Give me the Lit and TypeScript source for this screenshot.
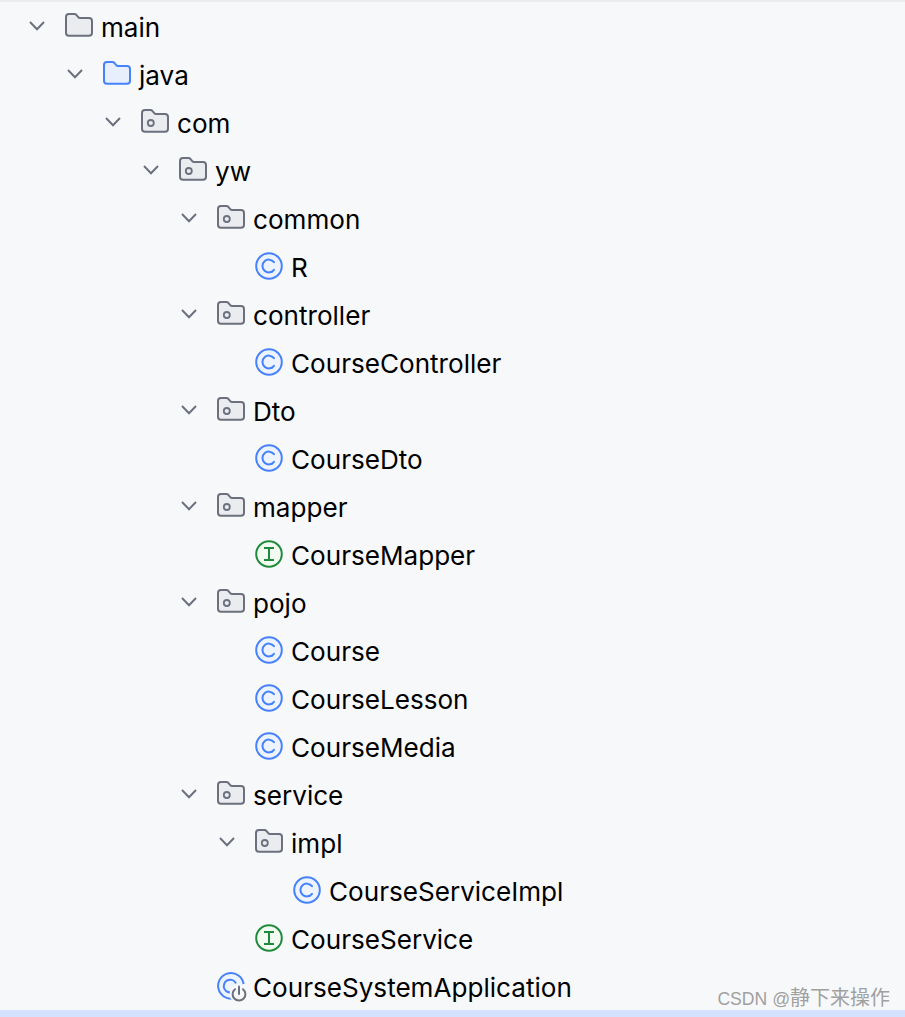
import { LitElement, html, css, svg } from "lit";
import { customElement } from "lit/decorators.js";

type Kind = "source" | "java" | "pkg" | "class" | "iface" | "run";
interface Node { d: number; k: Kind; t: string; }

const ROWS: Node[] = [
  { d: 0, k: "source", t: "main" },
  { d: 1, k: "java", t: "java" },
  { d: 2, k: "pkg", t: "com" },
  { d: 3, k: "pkg", t: "yw" },
  { d: 4, k: "pkg", t: "common" },
  { d: 5, k: "class", t: "R" },
  { d: 4, k: "pkg", t: "controller" },
  { d: 5, k: "class", t: "CourseController" },
  { d: 4, k: "pkg", t: "Dto" },
  { d: 5, k: "class", t: "CourseDto" },
  { d: 4, k: "pkg", t: "mapper" },
  { d: 5, k: "iface", t: "CourseMapper" },
  { d: 4, k: "pkg", t: "pojo" },
  { d: 5, k: "class", t: "Course" },
  { d: 5, k: "class", t: "CourseLesson" },
  { d: 5, k: "class", t: "CourseMedia" },
  { d: 4, k: "pkg", t: "service" },
  { d: 5, k: "pkg", t: "impl" },
  { d: 6, k: "class", t: "CourseServiceImpl" },
  { d: 5, k: "iface", t: "CourseService" },
  { d: 4, k: "run", t: "CourseSystemApplication" },
];

const FOLDER = "M1 5 a3 3 0 0 1 3-3 h5.5 a2.5 2.5 0 0 1 1.8.8 l2 2.4 a2.5 2.5 0 0 0 1.8.8 h8.9 a3 3 0 0 1 3 3 v11.7 a3 3 0 0 1-3 3 h-20 a3 3 0 0 1-3-3 z";

function icon(k: Kind) {
  let body;
  if (k === "source") {
    body = svg`<path d=${FOLDER} fill="#ebecf0" stroke="#6c707e" stroke-width="2"/>`;
  } else if (k === "java") {
    body = svg`<path d=${FOLDER} fill="#e7effd" stroke="#4682fa" stroke-width="2"/>`;
  } else if (k === "pkg") {
    body = svg`<path d=${FOLDER} fill="#ebecf0" stroke="#6c707e" stroke-width="2"/>
      <circle cx="9.8" cy="15" r="3" fill="none" stroke="#6c707e" stroke-width="1.8"/>`;
  } else if (k === "class") {
    body = svg`<circle cx="14" cy="14" r="12.8" fill="#edf3ff" stroke="#4682fa" stroke-width="2"/>
      <path d="M19 10.2 a6.4 6.4 0 1 0 0 7.6" fill="none" stroke="#4682fa" stroke-width="2" stroke-linecap="round"/>`;
  } else if (k === "iface") {
    body = svg`<circle cx="14" cy="14" r="12.8" fill="#f2fcf3" stroke="#208a3c" stroke-width="2"/>
      <path d="M9 8 h10 M9 20 h10 M14 8 v12" fill="none" stroke="#208a3c" stroke-width="2"/>`;
  } else {
    body = svg`<path d="M16.5 26.4 A12.8 12.8 0 1 1 26.6 12" fill="#edf3ff" stroke="#4682fa" stroke-width="2"/>
      <path d="M18.6 10.6 a6.4 6.4 0 1 0 -3 9.4" fill="none" stroke="#4682fa" stroke-width="2" stroke-linecap="round"/>
      <circle cx="22" cy="22" r="9.5" fill="#f7f8fa"/>
      <path d="M18 17.2 a6.4 6.4 0 1 0 8 0" fill="none" stroke="#6c707e" stroke-width="2" stroke-linecap="round"/>
      <path d="M22 14.5 v7.5" fill="none" stroke="#6c707e" stroke-width="2" stroke-linecap="round"/>`;
  }
  return html`<svg class="ic" viewBox="0 0 28 28" width="28" height="28">${body}</svg>`;
}

const chevron = html`<svg class="chev" viewBox="0 0 16 10" width="16" height="10"><path d="M1 1 L8 8.2 L15 1" fill="none" stroke="#6c707e" stroke-width="2"/></svg>`;

@customElement("app-root")
export class AppRoot extends LitElement {
  static styles = css`
    :host { display: block; }
    .page {
      position: relative;
      height: 1017px;
      background: #f7f8fa;
      display: flex;
      flex-direction: column;
      overflow: hidden;
      font-family: "Inter", "Liberation Sans", sans-serif;
      color: #000;
    }
    .top { height: 2px; background: #ebecf0; flex: none; }
    .tree { flex: 1; }
    .bottom { height: 7px; background: #d4e2ff; flex: none; }
    .row { display: flex; align-items: center; height: 48px; font-size: 26.1px; white-space: nowrap; }
    .twist { width: 65px; flex: none; box-sizing: border-box; padding-left: 29px; display: flex; align-items: center; }
    .ic { flex: none; margin-right: 8px; display: block; overflow: visible; }
    .chev { display: block; }
    .label { padding-top: 2px; }
    .mark {
      position: absolute;
      right: 15px;
      top: 985px;
      font-family: "Liberation Sans", "Noto Sans CJK SC", sans-serif;
      font-size: 20px;
      line-height: 26px;
      color: #a0a0a0;
    }
    .latin { font-size: 17.6px; }
  `;

  render() {
    return html`<div class="page">
      <div class="top"></div>
      <div class="tree">
        ${ROWS.map((r) => {
          const expandable = r.k === "source" || r.k === "java" || r.k === "pkg";
          return html`<div class="row" style="padding-left:${r.d * 38}px">
            <span class="twist">${expandable ? chevron : ""}</span>
            ${icon(r.k)}<span class="label">${r.t}</span>
          </div>`;
        })}
      </div>
      <div class="bottom"></div>
      <div class="mark"><span class="latin">CSDN @</span>静下来操作</div>
    </div>`;
  }
}
